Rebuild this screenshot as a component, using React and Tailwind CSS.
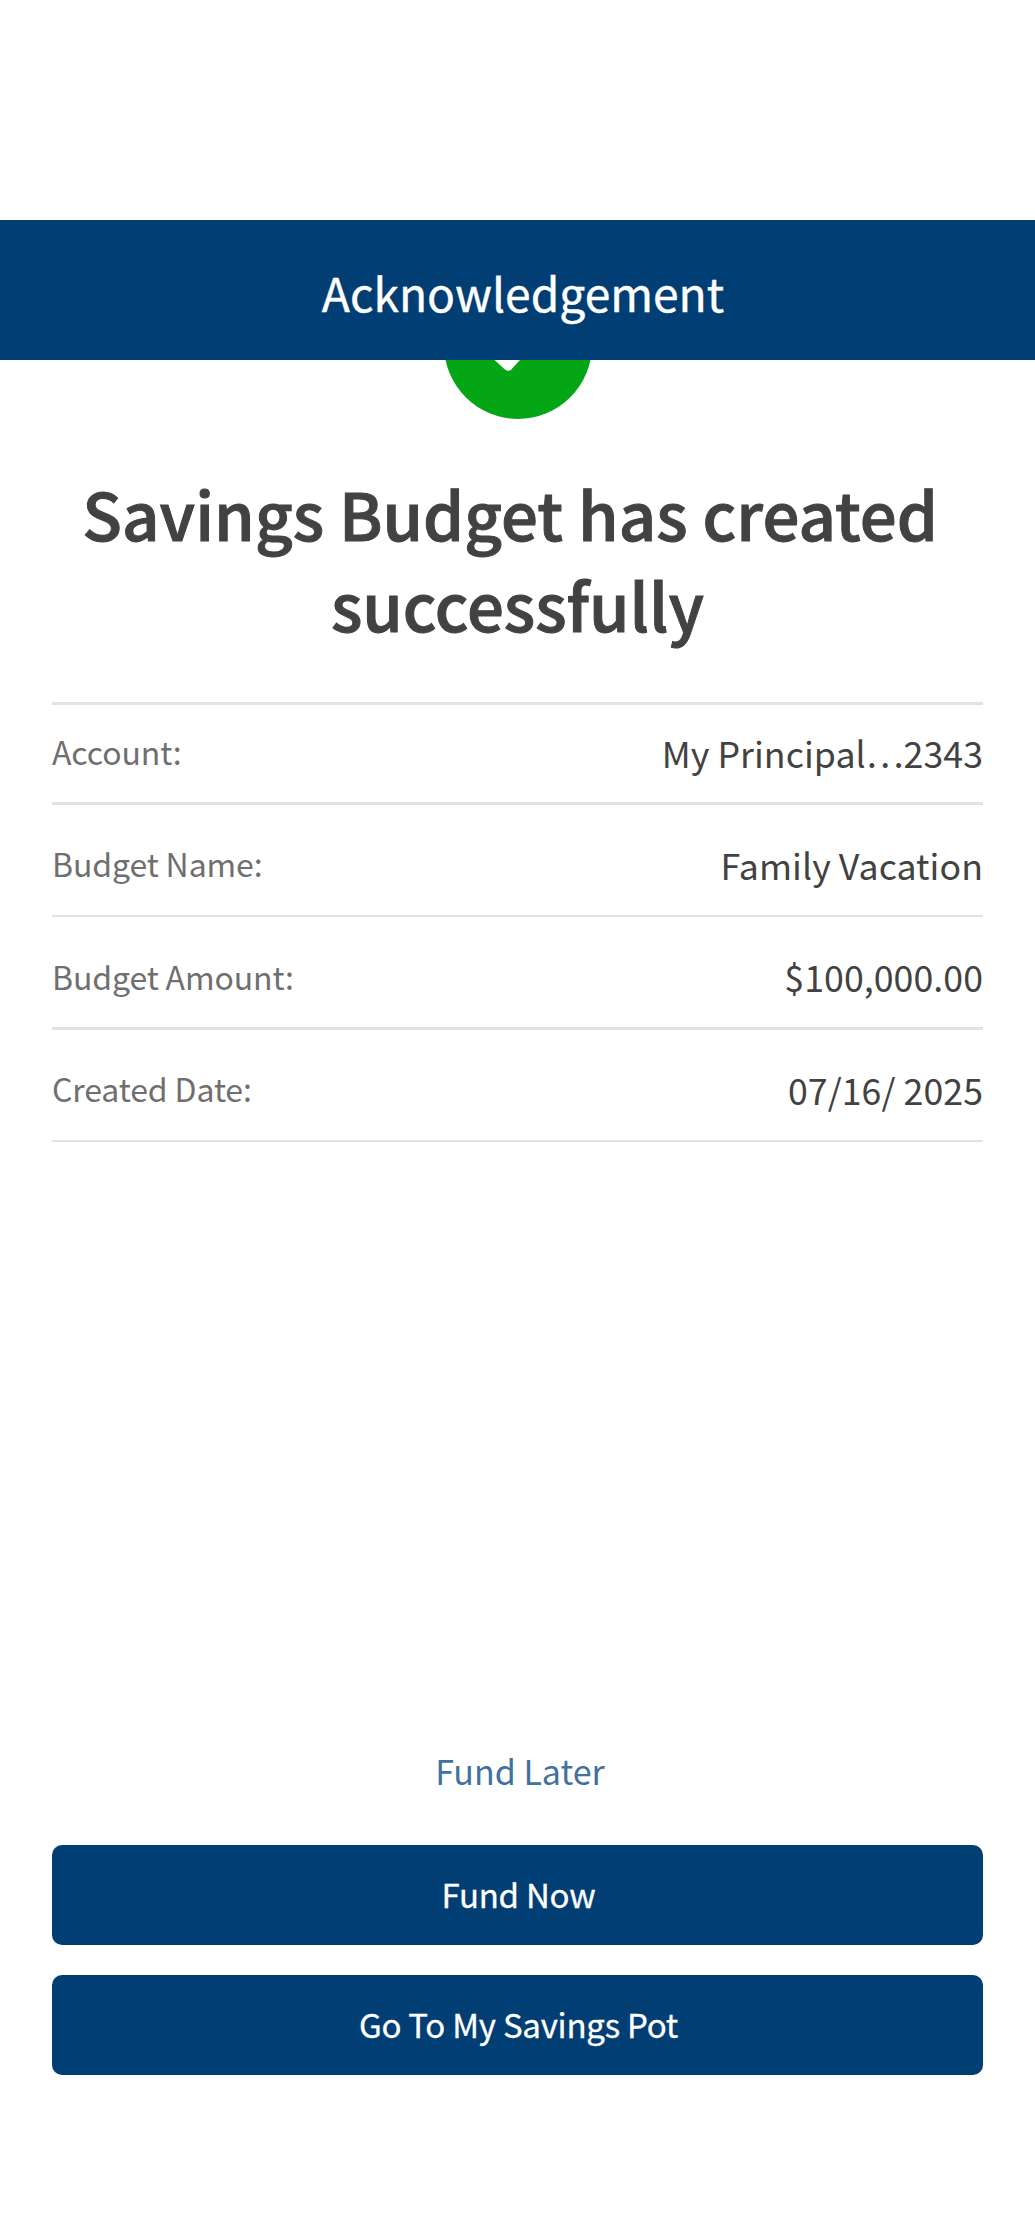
const rows = [
  { label: "Account:", value: "My Principal…2343", style: "h-[100px] border-b-[3px] pb-[4px]" },
  { label: "Budget Name:", value: "Family Vacation", style: "h-[112px] border-b-2 pt-[7px]" },
  { label: "Budget Amount:", value: "$100,000.00", style: "h-[113px] border-b-[3px] pt-[8px]" },
  { label: "Created Date:", value: "07/16/ 2025", style: "h-[112px] border-b-2 pt-[7px]" },
];

export default function App() {
  return (
    <div className="flex h-[2240px] w-[1035px] flex-col bg-white font-['Noto_Sans_CJK_SC',sans-serif] text-[#424242]">
      <header className="mt-[220px] flex h-[140px] items-center justify-center bg-[#003e74] pt-[5px] pl-[11px] text-[46.2px] leading-none text-white [-webkit-text-stroke:0.4px_white]">
        Acknowledgement
      </header>
      <div className="flex h-[59px] items-end justify-center overflow-hidden">
        <svg width="148" height="148" viewBox="0 0 148 148" className="shrink-0">
          <circle cx="74" cy="74" r="74" fill="#05a616" />
          <path d="M42 74l22 20.7 42-46" fill="none" stroke="#fff" strokeWidth="10" strokeLinejoin="round" strokeLinecap="round" />
        </svg>
      </div>
      <h1 className="mt-[48px] text-center text-[65.3px] leading-[91px] font-medium [-webkit-text-stroke:1px_#424242]">
        <span className="tracking-[0.08px]">Savings Budget has created&nbsp;</span>
        <br />
        successfully
      </h1>
      <dl className="mx-[52px] mt-[53px] border-t-[3px] border-[#e2e2e2]">
        {rows.map(({ label, value, style }) => (
          <div key={label} className={`flex items-center justify-between border-[#e2e2e2] leading-none ${style}`}>
            <dt className="pb-px text-[32px] tracking-[-0.12px] text-[#6f6f6f]">{label}</dt>
            <dd className="pt-[2px] text-[35.7px] tracking-[0.05px]">{value}</dd>
          </div>
        ))}
      </dl>
      <div className="mx-[52px] mt-[598px] flex flex-col text-[33px] leading-none tracking-[-0.25px]">
        <button className="h-[60px] pt-[2px] pl-[5px] text-[34px] tracking-normal text-[#41719f]">Fund Later</button>
        <button className="mt-[45px] h-[100px] rounded-[10px] bg-[#003e74] pb-px pl-[2px] text-white [-webkit-text-stroke:0.3px_white]">Fund Now</button>
        <button className="mt-[30px] h-[100px] rounded-[10px] bg-[#003e74] pb-px pl-[2px] text-white [-webkit-text-stroke:0.3px_white]">Go To My Savings Pot</button>
      </div>
    </div>
  );
}
